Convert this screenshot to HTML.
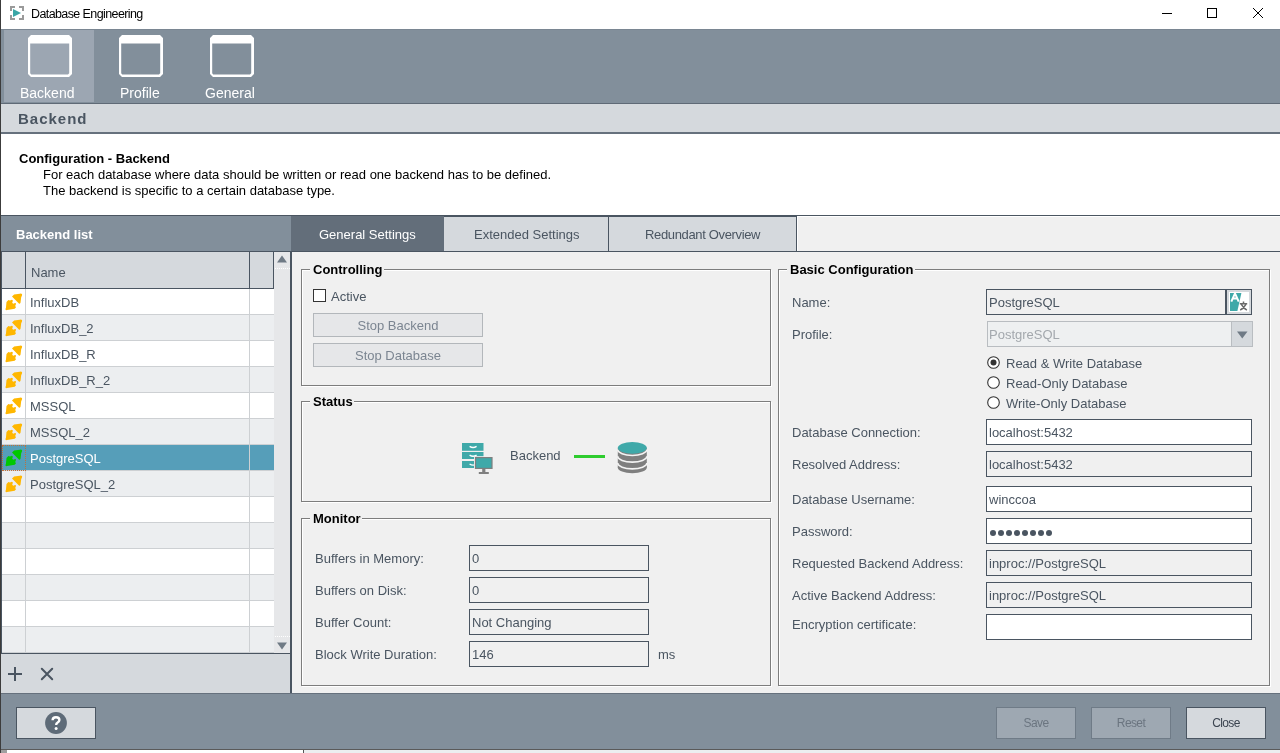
<!DOCTYPE html>
<html><head><meta charset="utf-8">
<style>
*{box-sizing:border-box;margin:0;padding:0}
html,body{width:1280px;height:753px;overflow:hidden;background:#fff}
body{position:relative;font-family:"Liberation Sans",sans-serif;font-size:13px;color:#4a5561}
.a{position:absolute}
.t{position:absolute;white-space:nowrap;will-change:transform}
svg{position:absolute;overflow:visible}
</style></head><body>
<div class="a" style="left:0px;top:0px;width:1280px;height:29px;background:#fff"></div>
<svg style="left:10px;top:6px" width="14" height="14" viewBox="0 0 14 14">
<path d="M1 5V1H5 M9 1H13V5 M13 9V13H9 M5 13H1V9" fill="none" stroke="#9a9a9a" stroke-width="2"/>
<path d="M3 3L11 7L3 11Z" fill="#3aa6a6"/></svg>
<div class="t" style="left:30.5px;top:7.92px;font-size:12.5px;line-height:12.5px;font-weight:400;color:#000;letter-spacing:-0.6px">Database Engineering</div>
<div class="a" style="left:1162px;top:13px;width:10px;height:1px;background:#000"></div>
<div class="a" style="left:1207px;top:8px;width:10px;height:10px;border:1px solid #000"></div>
<svg style="left:1253px;top:8px" width="10" height="10" viewBox="0 0 10 10"><path d="M0 0L10 10M10 0L0 10" stroke="#000" stroke-width="1"/></svg>
<div class="a" style="left:0px;top:29px;width:1280px;height:75px;background:#828f9b;border-top:1px solid #7a8692;border-bottom:1px solid #5f6a76"></div>
<div class="a" style="left:4px;top:30px;width:90px;height:72px;background:#9ca6b2"></div>
<svg style="left:28px;top:35px" width="44" height="42" viewBox="0 0 44 42"><path fill-rule="evenodd" fill="#fff" d="M3 0H41L44 3V39L41 42H3L0 39V3Z M2.2 8.6V38.2L3.2 39.4H40L41.2 38.2V8.6Z"/></svg>
<div class="t" style="left:20px;top:86.15px;font-size:14px;line-height:14px;font-weight:400;color:#fff;">Backend</div>
<svg style="left:119px;top:35px" width="44" height="42" viewBox="0 0 44 42"><path fill-rule="evenodd" fill="#fff" d="M3 0H41L44 3V39L41 42H3L0 39V3Z M2.2 8.6V38.2L3.2 39.4H40L41.2 38.2V8.6Z"/></svg>
<div class="t" style="left:119.5px;top:86.15px;font-size:14px;line-height:14px;font-weight:400;color:#fff;">Profile</div>
<svg style="left:210px;top:35px" width="44" height="42" viewBox="0 0 44 42"><path fill-rule="evenodd" fill="#fff" d="M3 0H41L44 3V39L41 42H3L0 39V3Z M2.2 8.6V38.2L3.2 39.4H40L41.2 38.2V8.6Z"/></svg>
<div class="t" style="left:204.6px;top:86.15px;font-size:14px;line-height:14px;font-weight:400;color:#fff;">General</div>
<div class="a" style="left:0px;top:104px;width:1280px;height:30px;background:#d5d9dd;border-bottom:2px solid #66717d"></div>
<div class="t" style="left:18px;top:111.30px;font-size:15px;line-height:15px;font-weight:700;color:#4a5561;letter-spacing:1px">Backend</div>
<div class="a" style="left:0px;top:134px;width:1280px;height:81px;background:#fff"></div>
<div class="t" style="left:19px;top:151.99px;font-size:13px;line-height:13px;font-weight:700;color:#000;">Configuration - Backend</div>
<div class="t" style="left:43px;top:167.99px;font-size:13px;line-height:13px;font-weight:400;color:#000;">For each database where data should be written or read one backend has to be defined.</div>
<div class="t" style="left:43px;top:183.99px;font-size:13px;line-height:13px;font-weight:400;color:#000;">The backend is specific to a certain database type.</div>
<div class="a" style="left:0px;top:215px;width:292px;height:478px;background:#eceef0;border-top:1px solid #4a5561"></div>
<div class="a" style="left:0px;top:216px;width:291px;height:35px;background:#828f9b"></div>
<div class="t" style="left:16px;top:227.99px;font-size:13px;line-height:13px;font-weight:700;color:#fff;">Backend list</div>
<div class="a" style="left:1px;top:251px;width:273px;height:38px;background:#d5d9dd;border-top:1px solid #4a5561;border-bottom:1px solid #4a5561;border-right:1px solid #4a5561"></div>
<div class="a" style="left:25px;top:251px;width:1px;height:38px;background:#4a5561"></div>
<div class="a" style="left:249px;top:251px;width:1px;height:38px;background:#4a5561"></div>
<div class="t" style="left:31px;top:265.99px;font-size:13px;line-height:13px;font-weight:400;color:#4a5561;">Name</div>
<div class="a" style="left:1px;top:289px;width:273px;height:26px;background:#fff"></div>
<div class="a" style="left:1px;top:314px;width:273px;height:1px;background:#cdd0d3"></div>
<div class="a" style="left:25px;top:289px;width:1px;height:26px;background:#cdd0d3"></div>
<div class="a" style="left:249px;top:289px;width:1px;height:26px;background:#cdd0d3"></div>
<svg style="left:2px;top:290px" width="24" height="24" viewBox="0 0 24 24"><path d="M10 6.4L12.1 4.4L17.8 3.7Q19.2 2.9 20.1 4.3Q20.3 5.2 19.2 7.3L18.5 12.7Q17.9 14.1 16.9 13.6Z" fill="#ffb700"/><path d="M3.5 19.4Q3.2 18.6 3.9 18.2L4.5 12.1L6.4 10.1L8 10.5L9.9 9.7Q11.1 10 10.8 10.9L10.2 12.7L11.2 13.7L13.1 13Q14.2 13.1 14 14.1L13.2 15.9L14 17.2L12.7 18.8L5.1 20.1Q4 20.3 3.5 19.4Z" fill="#ffb700"/></svg>
<div class="t" style="left:30px;top:295.99px;font-size:13px;line-height:13px;font-weight:400;color:#4a5561;">InfluxDB</div>
<div class="a" style="left:1px;top:315px;width:273px;height:26px;background:#eceef0"></div>
<div class="a" style="left:1px;top:340px;width:273px;height:1px;background:#cdd0d3"></div>
<div class="a" style="left:25px;top:315px;width:1px;height:26px;background:#cdd0d3"></div>
<div class="a" style="left:249px;top:315px;width:1px;height:26px;background:#cdd0d3"></div>
<svg style="left:2px;top:316px" width="24" height="24" viewBox="0 0 24 24"><path d="M10 6.4L12.1 4.4L17.8 3.7Q19.2 2.9 20.1 4.3Q20.3 5.2 19.2 7.3L18.5 12.7Q17.9 14.1 16.9 13.6Z" fill="#ffb700"/><path d="M3.5 19.4Q3.2 18.6 3.9 18.2L4.5 12.1L6.4 10.1L8 10.5L9.9 9.7Q11.1 10 10.8 10.9L10.2 12.7L11.2 13.7L13.1 13Q14.2 13.1 14 14.1L13.2 15.9L14 17.2L12.7 18.8L5.1 20.1Q4 20.3 3.5 19.4Z" fill="#ffb700"/></svg>
<div class="t" style="left:30px;top:321.99px;font-size:13px;line-height:13px;font-weight:400;color:#4a5561;">InfluxDB_2</div>
<div class="a" style="left:1px;top:341px;width:273px;height:26px;background:#fff"></div>
<div class="a" style="left:1px;top:366px;width:273px;height:1px;background:#cdd0d3"></div>
<div class="a" style="left:25px;top:341px;width:1px;height:26px;background:#cdd0d3"></div>
<div class="a" style="left:249px;top:341px;width:1px;height:26px;background:#cdd0d3"></div>
<svg style="left:2px;top:342px" width="24" height="24" viewBox="0 0 24 24"><path d="M10 6.4L12.1 4.4L17.8 3.7Q19.2 2.9 20.1 4.3Q20.3 5.2 19.2 7.3L18.5 12.7Q17.9 14.1 16.9 13.6Z" fill="#ffb700"/><path d="M3.5 19.4Q3.2 18.6 3.9 18.2L4.5 12.1L6.4 10.1L8 10.5L9.9 9.7Q11.1 10 10.8 10.9L10.2 12.7L11.2 13.7L13.1 13Q14.2 13.1 14 14.1L13.2 15.9L14 17.2L12.7 18.8L5.1 20.1Q4 20.3 3.5 19.4Z" fill="#ffb700"/></svg>
<div class="t" style="left:30px;top:347.99px;font-size:13px;line-height:13px;font-weight:400;color:#4a5561;">InfluxDB_R</div>
<div class="a" style="left:1px;top:367px;width:273px;height:26px;background:#eceef0"></div>
<div class="a" style="left:1px;top:392px;width:273px;height:1px;background:#cdd0d3"></div>
<div class="a" style="left:25px;top:367px;width:1px;height:26px;background:#cdd0d3"></div>
<div class="a" style="left:249px;top:367px;width:1px;height:26px;background:#cdd0d3"></div>
<svg style="left:2px;top:368px" width="24" height="24" viewBox="0 0 24 24"><path d="M10 6.4L12.1 4.4L17.8 3.7Q19.2 2.9 20.1 4.3Q20.3 5.2 19.2 7.3L18.5 12.7Q17.9 14.1 16.9 13.6Z" fill="#ffb700"/><path d="M3.5 19.4Q3.2 18.6 3.9 18.2L4.5 12.1L6.4 10.1L8 10.5L9.9 9.7Q11.1 10 10.8 10.9L10.2 12.7L11.2 13.7L13.1 13Q14.2 13.1 14 14.1L13.2 15.9L14 17.2L12.7 18.8L5.1 20.1Q4 20.3 3.5 19.4Z" fill="#ffb700"/></svg>
<div class="t" style="left:30px;top:373.99px;font-size:13px;line-height:13px;font-weight:400;color:#4a5561;">InfluxDB_R_2</div>
<div class="a" style="left:1px;top:393px;width:273px;height:26px;background:#fff"></div>
<div class="a" style="left:1px;top:418px;width:273px;height:1px;background:#cdd0d3"></div>
<div class="a" style="left:25px;top:393px;width:1px;height:26px;background:#cdd0d3"></div>
<div class="a" style="left:249px;top:393px;width:1px;height:26px;background:#cdd0d3"></div>
<svg style="left:2px;top:394px" width="24" height="24" viewBox="0 0 24 24"><path d="M10 6.4L12.1 4.4L17.8 3.7Q19.2 2.9 20.1 4.3Q20.3 5.2 19.2 7.3L18.5 12.7Q17.9 14.1 16.9 13.6Z" fill="#ffb700"/><path d="M3.5 19.4Q3.2 18.6 3.9 18.2L4.5 12.1L6.4 10.1L8 10.5L9.9 9.7Q11.1 10 10.8 10.9L10.2 12.7L11.2 13.7L13.1 13Q14.2 13.1 14 14.1L13.2 15.9L14 17.2L12.7 18.8L5.1 20.1Q4 20.3 3.5 19.4Z" fill="#ffb700"/></svg>
<div class="t" style="left:30px;top:399.99px;font-size:13px;line-height:13px;font-weight:400;color:#4a5561;">MSSQL</div>
<div class="a" style="left:1px;top:419px;width:273px;height:26px;background:#eceef0"></div>
<div class="a" style="left:1px;top:444px;width:273px;height:1px;background:#cdd0d3"></div>
<div class="a" style="left:25px;top:419px;width:1px;height:26px;background:#cdd0d3"></div>
<div class="a" style="left:249px;top:419px;width:1px;height:26px;background:#cdd0d3"></div>
<svg style="left:2px;top:420px" width="24" height="24" viewBox="0 0 24 24"><path d="M10 6.4L12.1 4.4L17.8 3.7Q19.2 2.9 20.1 4.3Q20.3 5.2 19.2 7.3L18.5 12.7Q17.9 14.1 16.9 13.6Z" fill="#ffb700"/><path d="M3.5 19.4Q3.2 18.6 3.9 18.2L4.5 12.1L6.4 10.1L8 10.5L9.9 9.7Q11.1 10 10.8 10.9L10.2 12.7L11.2 13.7L13.1 13Q14.2 13.1 14 14.1L13.2 15.9L14 17.2L12.7 18.8L5.1 20.1Q4 20.3 3.5 19.4Z" fill="#ffb700"/></svg>
<div class="t" style="left:30px;top:425.99px;font-size:13px;line-height:13px;font-weight:400;color:#4a5561;">MSSQL_2</div>
<div class="a" style="left:1px;top:445px;width:273px;height:26px;background:#569eb9"></div>
<div class="a" style="left:1px;top:470px;width:273px;height:1px;background:#cdd0d3"></div>
<div class="a" style="left:249px;top:445px;width:1px;height:26px;background:#cdd0d3"></div>
<svg style="left:2px;top:446px" width="24" height="24" viewBox="0 0 24 24"><path d="M10 6.4L12.1 4.4L17.8 3.7Q19.2 2.9 20.1 4.3Q20.3 5.2 19.2 7.3L18.5 12.7Q17.9 14.1 16.9 13.6Z" fill="#00c800"/><path d="M3.5 19.4Q3.2 18.6 3.9 18.2L4.5 12.1L6.4 10.1L8 10.5L9.9 9.7Q11.1 10 10.8 10.9L10.2 12.7L11.2 13.7L13.1 13Q14.2 13.1 14 14.1L13.2 15.9L14 17.2L12.7 18.8L5.1 20.1Q4 20.3 3.5 19.4Z" fill="#00c800"/></svg>
<div class="t" style="left:30px;top:451.99px;font-size:13px;line-height:13px;font-weight:400;color:#fff;">PostgreSQL</div>
<div class="a" style="left:2px;top:445px;width:24px;height:26px;border:1px dotted #c0703a"></div>
<div class="a" style="left:1px;top:471px;width:273px;height:26px;background:#eceef0"></div>
<div class="a" style="left:1px;top:496px;width:273px;height:1px;background:#cdd0d3"></div>
<div class="a" style="left:25px;top:471px;width:1px;height:26px;background:#cdd0d3"></div>
<div class="a" style="left:249px;top:471px;width:1px;height:26px;background:#cdd0d3"></div>
<svg style="left:2px;top:472px" width="24" height="24" viewBox="0 0 24 24"><path d="M10 6.4L12.1 4.4L17.8 3.7Q19.2 2.9 20.1 4.3Q20.3 5.2 19.2 7.3L18.5 12.7Q17.9 14.1 16.9 13.6Z" fill="#ffb700"/><path d="M3.5 19.4Q3.2 18.6 3.9 18.2L4.5 12.1L6.4 10.1L8 10.5L9.9 9.7Q11.1 10 10.8 10.9L10.2 12.7L11.2 13.7L13.1 13Q14.2 13.1 14 14.1L13.2 15.9L14 17.2L12.7 18.8L5.1 20.1Q4 20.3 3.5 19.4Z" fill="#ffb700"/></svg>
<div class="t" style="left:30px;top:477.99px;font-size:13px;line-height:13px;font-weight:400;color:#4a5561;">PostgreSQL_2</div>
<div class="a" style="left:1px;top:497px;width:273px;height:26px;background:#fff"></div>
<div class="a" style="left:1px;top:522px;width:273px;height:1px;background:#cdd0d3"></div>
<div class="a" style="left:25px;top:497px;width:1px;height:26px;background:#cdd0d3"></div>
<div class="a" style="left:249px;top:497px;width:1px;height:26px;background:#cdd0d3"></div>
<div class="a" style="left:1px;top:523px;width:273px;height:26px;background:#eceef0"></div>
<div class="a" style="left:1px;top:548px;width:273px;height:1px;background:#cdd0d3"></div>
<div class="a" style="left:25px;top:523px;width:1px;height:26px;background:#cdd0d3"></div>
<div class="a" style="left:249px;top:523px;width:1px;height:26px;background:#cdd0d3"></div>
<div class="a" style="left:1px;top:549px;width:273px;height:26px;background:#fff"></div>
<div class="a" style="left:1px;top:574px;width:273px;height:1px;background:#cdd0d3"></div>
<div class="a" style="left:25px;top:549px;width:1px;height:26px;background:#cdd0d3"></div>
<div class="a" style="left:249px;top:549px;width:1px;height:26px;background:#cdd0d3"></div>
<div class="a" style="left:1px;top:575px;width:273px;height:26px;background:#eceef0"></div>
<div class="a" style="left:1px;top:600px;width:273px;height:1px;background:#cdd0d3"></div>
<div class="a" style="left:25px;top:575px;width:1px;height:26px;background:#cdd0d3"></div>
<div class="a" style="left:249px;top:575px;width:1px;height:26px;background:#cdd0d3"></div>
<div class="a" style="left:1px;top:601px;width:273px;height:26px;background:#fff"></div>
<div class="a" style="left:1px;top:626px;width:273px;height:1px;background:#cdd0d3"></div>
<div class="a" style="left:25px;top:601px;width:1px;height:26px;background:#cdd0d3"></div>
<div class="a" style="left:249px;top:601px;width:1px;height:26px;background:#cdd0d3"></div>
<div class="a" style="left:1px;top:627px;width:273px;height:26px;background:#eceef0"></div>
<div class="a" style="left:1px;top:652px;width:273px;height:1px;background:#cdd0d3"></div>
<div class="a" style="left:25px;top:627px;width:1px;height:26px;background:#cdd0d3"></div>
<div class="a" style="left:249px;top:627px;width:1px;height:26px;background:#cdd0d3"></div>
<div class="a" style="left:1px;top:251px;width:1px;height:402px;background:#4a5561"></div>
<div class="a" style="left:274px;top:252px;width:17px;height:401px;background:#e6e7e9"></div>
<svg style="left:276px;top:254.5px" width="12" height="8" viewBox="0 0 12 8"><path d="M1 7.5L6 0.5L11 7.5Z" fill="#6f7a85"/></svg>
<div class="a" style="left:275px;top:268px;width:15px;height:1px;border-top:1px dotted #fff"></div>
<svg style="left:276px;top:642px" width="12" height="8" viewBox="0 0 12 8"><path d="M1 0.5L6 7.5L11 0.5Z" fill="#6f7a85"/></svg>
<div class="a" style="left:275px;top:636px;width:15px;height:1px;border-top:1px dotted #fff"></div>
<div class="a" style="left:290px;top:251px;width:2px;height:442px;background:#4a5561"></div>
<div class="a" style="left:274px;top:251px;width:16px;height:1px;background:#4a5561"></div>
<div class="a" style="left:0px;top:653px;width:291px;height:40px;background:#d5d9dd;border-top:1px solid #4a5561"></div>
<div class="a" style="left:290px;top:653px;width:2px;height:40px;background:#4a5561"></div>
<div class="a" style="left:292px;top:692px;width:988px;height:1px;background:#fff"></div>
<svg style="left:8px;top:667px" width="14" height="14" viewBox="0 0 14 14"><path d="M0 7H14M7 0V14" stroke="#4a5561" stroke-width="2"/></svg>
<svg style="left:41px;top:668px" width="12" height="12" viewBox="0 0 12 12"><path d="M0.8 0.8L11.2 11.2M11.2 0.8L0.8 11.2" stroke="#4a5561" stroke-width="2" stroke-linecap="round"/></svg>
<div class="a" style="left:291px;top:215px;width:989px;height:478px;background:#f0f0f0;border-top:1px solid #4a5561"></div>
<div class="a" style="left:291px;top:216px;width:989px;height:36px;background:#f0f0f0;border-bottom:1px solid #4a5561"></div>
<div class="a" style="left:291px;top:216px;width:153px;height:35px;background:#636e7a"></div>
<div class="a" style="left:444px;top:216px;width:165px;height:35px;background:#d5d9dd;border-right:1px solid #4a5561"></div>
<div class="a" style="left:609px;top:216px;width:188px;height:35px;background:#d5d9dd;border-right:1px solid #4a5561"></div>
<div class="t" style="left:319px;top:227.99px;font-size:13px;line-height:13px;font-weight:400;color:#fff;">General Settings</div>
<div class="a" style="left:444px;top:216px;width:353px;height:1px;background:#4a5561"></div>
<div class="a" style="left:797px;top:216px;width:483px;height:1px;background:#fff"></div>
<div class="a" style="left:797px;top:216px;width:1px;height:35px;background:#fff"></div>
<div class="a" style="left:290px;top:252px;width:2px;height:441px;background:#4a5561"></div>
<div class="t" style="left:473.5px;top:227.99px;font-size:13px;line-height:13px;font-weight:400;color:#4a5561;">Extended Settings</div>
<div class="t" style="left:645px;top:227.99px;font-size:13px;line-height:13px;font-weight:400;color:#4a5561;letter-spacing:-0.35px">Redundant Overview</div>
<div class="a" style="left:301px;top:269px;width:470px;height:117px;border:1px solid #7d7d7d;box-shadow:inset 1px 1px 0 #fff, 1px 1px 0 #fff"></div>
<div class="a" style="left:310px;top:263px;width:74px;height:12px;background:#f0f0f0"></div>
<div class="t" style="left:312.5px;top:262.99px;font-size:13px;line-height:13px;font-weight:700;color:#000;">Controlling</div>
<div class="a" style="left:313px;top:289px;width:13px;height:13px;border:1px solid #333;background:#fff"></div>
<div class="t" style="left:331px;top:289.99px;font-size:13px;line-height:13px;font-weight:400;color:#4a5561;">Active</div>
<div class="a" style="left:313px;top:313px;width:170px;height:24px;background:#e6e7e9;border:1px solid #b3b7bb"></div>
<div class="t" style="left:198.0px;width:400px;text-align:center;top:319.29px;font-size:13px;line-height:13px;font-weight:400;color:#7b8591;">Stop Backend</div>
<div class="a" style="left:313px;top:343px;width:170px;height:24px;background:#e6e7e9;border:1px solid #b3b7bb"></div>
<div class="t" style="left:198.0px;width:400px;text-align:center;top:349.29px;font-size:13px;line-height:13px;font-weight:400;color:#7b8591;">Stop Database</div>
<div class="a" style="left:301px;top:401px;width:470px;height:101px;border:1px solid #7d7d7d;box-shadow:inset 1px 1px 0 #fff, 1px 1px 0 #fff"></div>
<div class="a" style="left:310px;top:395px;width:44px;height:12px;background:#f0f0f0"></div>
<div class="t" style="left:312.5px;top:394.99px;font-size:13px;line-height:13px;font-weight:700;color:#000;">Status</div>
<svg style="left:458px;top:438px" width="40" height="40" viewBox="0 0 40 40">
<rect x="4" y="5" width="21.5" height="7.8" fill="#3fa9a9"/>
<rect x="4" y="14" width="21.5" height="7" fill="#3fa9a9"/>
<rect x="4" y="23" width="21.5" height="7" fill="#3fa9a9"/>
<path d="M11.6 8.4Q15 10.6 18.6 8.4" stroke="#fff" stroke-width="1.4" fill="none"/>
<path d="M11.6 17.2Q15 19.4 18.6 17.2" stroke="#fff" stroke-width="1.4" fill="none"/>
<path d="M11.6 26Q15 28.2 18.6 26" stroke="#fff" stroke-width="1.4" fill="none"/>
<rect x="16" y="18.2" width="19.5" height="13.6" fill="#f0f0f0"/>
<rect x="17.5" y="19.6" width="16.5" height="10.8" fill="#3fa9a9" stroke="#7f7f7f" stroke-width="1.2"/>
<rect x="24.2" y="30.8" width="3.2" height="3.4" fill="#7f7f7f"/>
<rect x="20.8" y="34" width="10" height="2" fill="#7f7f7f"/>
</svg>
<div class="t" style="left:510px;top:448.99px;font-size:13px;line-height:13px;font-weight:400;color:#4a5561;">Backend</div>
<div class="a" style="left:574px;top:455px;width:31px;height:3px;background:#2ecc2e"></div>
<svg style="left:612px;top:438px" width="40" height="40" viewBox="0 0 40 40">
<rect x="5.8" y="9.85" width="29" height="19.6" fill="#7f7f7f"/>
<ellipse cx="20.3" cy="29.45" rx="14.5" ry="5.85" fill="#7f7f7f"/>
<path d="M5.8 11.6A14.5 5.85 0 0 0 34.8 11.6" stroke="#f4f4f4" stroke-width="1.6" fill="none"/>
<path d="M5.8 18.3A14.5 5.85 0 0 0 34.8 18.3" stroke="#f4f4f4" stroke-width="1.6" fill="none"/>
<path d="M5.8 25A14.5 5.85 0 0 0 34.8 25" stroke="#f4f4f4" stroke-width="1.6" fill="none"/>
<ellipse cx="20.3" cy="9.85" rx="14.5" ry="5.85" fill="#3fa9a9"/>
</svg>
<div class="a" style="left:301px;top:518px;width:470px;height:168px;border:1px solid #7d7d7d;box-shadow:inset 1px 1px 0 #fff, 1px 1px 0 #fff"></div>
<div class="a" style="left:310px;top:512px;width:52px;height:12px;background:#f0f0f0"></div>
<div class="t" style="left:312.5px;top:511.99px;font-size:13px;line-height:13px;font-weight:700;color:#000;">Monitor</div>
<div class="t" style="left:315px;top:551.99px;font-size:13px;line-height:13px;font-weight:400;color:#4a5561;">Buffers in Memory:</div>
<div class="a" style="left:469px;top:545px;width:180px;height:26px;border:1px solid #4a5561"></div>
<div class="t" style="left:472px;top:551.99px;font-size:13px;line-height:13px;font-weight:400;color:#4a5561;">0</div>
<div class="t" style="left:315px;top:583.99px;font-size:13px;line-height:13px;font-weight:400;color:#4a5561;">Buffers on Disk:</div>
<div class="a" style="left:469px;top:577px;width:180px;height:26px;border:1px solid #4a5561"></div>
<div class="t" style="left:472px;top:583.99px;font-size:13px;line-height:13px;font-weight:400;color:#4a5561;">0</div>
<div class="t" style="left:315px;top:615.99px;font-size:13px;line-height:13px;font-weight:400;color:#4a5561;">Buffer Count:</div>
<div class="a" style="left:469px;top:609px;width:180px;height:26px;border:1px solid #4a5561"></div>
<div class="t" style="left:472px;top:615.99px;font-size:13px;line-height:13px;font-weight:400;color:#4a5561;">Not Changing</div>
<div class="t" style="left:315px;top:647.99px;font-size:13px;line-height:13px;font-weight:400;color:#4a5561;">Block Write Duration:</div>
<div class="a" style="left:469px;top:641px;width:180px;height:26px;border:1px solid #4a5561"></div>
<div class="t" style="left:472px;top:647.99px;font-size:13px;line-height:13px;font-weight:400;color:#4a5561;">146</div>
<div class="t" style="left:658px;top:647.99px;font-size:13px;line-height:13px;font-weight:400;color:#4a5561;">ms</div>
<div class="a" style="left:778px;top:269px;width:492px;height:417px;border:1px solid #7d7d7d;box-shadow:inset 1px 1px 0 #fff, 1px 1px 0 #fff"></div>
<div class="a" style="left:787px;top:263px;width:128px;height:12px;background:#f0f0f0"></div>
<div class="t" style="left:789.5px;top:262.99px;font-size:13px;line-height:13px;font-weight:700;color:#000;">Basic Configuration</div>
<div class="t" style="left:792px;top:295.99px;font-size:13px;line-height:13px;font-weight:400;color:#4a5561;">Name:</div>
<div class="a" style="left:986px;top:289px;width:241px;height:26px;border:1px solid #4a5561;border-right-width:2px"></div>
<div class="t" style="left:989px;top:295.99px;font-size:13px;line-height:13px;font-weight:400;color:#4a5561;">PostgreSQL</div>
<div class="a" style="left:1226px;top:289px;width:26px;height:26px;background:#d5d9dd;border:1px solid #4a5561"></div>
<div class="a" style="left:1229px;top:292px;width:20px;height:20px;background:#fff"></div>
<svg style="left:1229px;top:292px" width="20" height="20" viewBox="0 0 20 20">
<path d="M1 1H12.4L8.4 19H1Z" fill="#3fa9a9"/>
<path d="M2.3 9.6L6 1.4L9.7 9.6M3.7 6.4H8.3" stroke="#fff" stroke-width="2" fill="none"/>
<path d="M10.8 11.7H18.2M14.5 9.6V11.7M12.3 12.3Q15 16.6 17.9 18.2M16.9 12.3Q14.6 16.6 11.2 18" stroke="#6a6a6a" stroke-width="1.5" fill="none"/>
</svg>
<div class="t" style="left:792px;top:327.99px;font-size:13px;line-height:13px;font-weight:400;color:#4a5561;">Profile:</div>
<div class="a" style="left:987px;top:321px;width:266px;height:26px;background:#eef0f1;border:1px solid #b9bdc1"></div>
<div class="a" style="left:1231px;top:322px;width:21px;height:24px;background:#d5d9dd;border-left:1px solid #b9bdc1"></div>
<svg style="left:1237px;top:331px" width="11" height="8" viewBox="0 0 11 8"><path d="M0 0.5H10.5L5.25 7.5Z" fill="#6f7a85"/></svg>
<div class="t" style="left:989px;top:327.99px;font-size:13px;line-height:13px;font-weight:400;color:#a3a8ad;">PostgreSQL</div>
<svg style="left:987px;top:356.0px" width="13" height="13" viewBox="0 0 13 13"><circle cx="6.5" cy="6.5" r="5.8" fill="#fff" stroke="#333" stroke-width="1.1"/><circle cx="6.5" cy="6.5" r="3" fill="#333"/></svg>
<div class="t" style="left:1006px;top:356.99px;font-size:13px;line-height:13px;font-weight:400;color:#4a5561;">Read &amp; Write Database</div>
<svg style="left:987px;top:376.0px" width="13" height="13" viewBox="0 0 13 13"><circle cx="6.5" cy="6.5" r="5.8" fill="#fff" stroke="#333" stroke-width="1.1"/></svg>
<div class="t" style="left:1006px;top:376.99px;font-size:13px;line-height:13px;font-weight:400;color:#4a5561;">Read-Only Database</div>
<svg style="left:987px;top:396.0px" width="13" height="13" viewBox="0 0 13 13"><circle cx="6.5" cy="6.5" r="5.8" fill="#fff" stroke="#333" stroke-width="1.1"/></svg>
<div class="t" style="left:1006px;top:396.99px;font-size:13px;line-height:13px;font-weight:400;color:#4a5561;">Write-Only Database</div>
<div class="t" style="left:792px;top:425.99px;font-size:13px;line-height:13px;font-weight:400;color:#4a5561;">Database Connection:</div>
<div class="a" style="left:986px;top:419px;width:266px;height:26px;background:#fff;border:1px solid #4a5561"></div>
<div class="t" style="left:989px;top:425.99px;font-size:13px;line-height:13px;font-weight:400;color:#4a5561;">localhost:5432</div>
<div class="t" style="left:792px;top:457.99px;font-size:13px;line-height:13px;font-weight:400;color:#4a5561;">Resolved Address:</div>
<div class="a" style="left:986px;top:451px;width:266px;height:26px;background:#f0f0f0;border:1px solid #4a5561"></div>
<div class="t" style="left:989px;top:457.99px;font-size:13px;line-height:13px;font-weight:400;color:#4a5561;">localhost:5432</div>
<div class="t" style="left:792px;top:492.99px;font-size:13px;line-height:13px;font-weight:400;color:#4a5561;">Database Username:</div>
<div class="a" style="left:986px;top:486px;width:266px;height:26px;background:#fff;border:1px solid #4a5561"></div>
<div class="t" style="left:989px;top:492.99px;font-size:13px;line-height:13px;font-weight:400;color:#4a5561;">winccoa</div>
<div class="t" style="left:792px;top:524.99px;font-size:13px;line-height:13px;font-weight:400;color:#4a5561;">Password:</div>
<div class="a" style="left:986px;top:518px;width:266px;height:26px;background:#fff;border:1px solid #4a5561"></div>
<div class="a" style="left:990px;top:530px;width:6px;height:6px;border-radius:50%;background:#4a5561"></div>
<div class="a" style="left:998px;top:530px;width:6px;height:6px;border-radius:50%;background:#4a5561"></div>
<div class="a" style="left:1006px;top:530px;width:6px;height:6px;border-radius:50%;background:#4a5561"></div>
<div class="a" style="left:1014px;top:530px;width:6px;height:6px;border-radius:50%;background:#4a5561"></div>
<div class="a" style="left:1022px;top:530px;width:6px;height:6px;border-radius:50%;background:#4a5561"></div>
<div class="a" style="left:1030px;top:530px;width:6px;height:6px;border-radius:50%;background:#4a5561"></div>
<div class="a" style="left:1038px;top:530px;width:6px;height:6px;border-radius:50%;background:#4a5561"></div>
<div class="a" style="left:1046px;top:530px;width:6px;height:6px;border-radius:50%;background:#4a5561"></div>
<div class="t" style="left:792px;top:556.99px;font-size:13px;line-height:13px;font-weight:400;color:#4a5561;">Requested Backend Address:</div>
<div class="a" style="left:986px;top:550px;width:266px;height:26px;background:#f0f0f0;border:1px solid #4a5561"></div>
<div class="t" style="left:989px;top:556.99px;font-size:13px;line-height:13px;font-weight:400;color:#4a5561;">inproc://PostgreSQL</div>
<div class="t" style="left:792px;top:588.99px;font-size:13px;line-height:13px;font-weight:400;color:#4a5561;">Active Backend Address:</div>
<div class="a" style="left:986px;top:582px;width:266px;height:26px;background:#f0f0f0;border:1px solid #4a5561"></div>
<div class="t" style="left:989px;top:588.99px;font-size:13px;line-height:13px;font-weight:400;color:#4a5561;">inproc://PostgreSQL</div>
<div class="t" style="left:792px;top:617.99px;font-size:13px;line-height:13px;font-weight:400;color:#4a5561;">Encryption certificate:</div>
<div class="a" style="left:986px;top:614px;width:266px;height:26px;background:#fff;border:1px solid #4a5561"></div>
<div class="a" style="left:0px;top:693px;width:1280px;height:57px;background:#828f9b;border-top:1px solid #66717d;border-bottom:1px solid #5a5a5a"></div>
<div class="a" style="left:16px;top:707px;width:80px;height:32px;background:#d5d9dd;border:1px solid #4a5561"></div>
<svg style="left:45px;top:712px" width="22" height="22" viewBox="0 0 22 22"><circle cx="11" cy="11" r="10.9" fill="#5e6b78"/>
<path d="M7.6 8.3Q7.6 5.2 11 5.2Q14.4 5.2 14.4 8Q14.4 9.6 12.4 10.7Q11.2 11.4 11.2 13" stroke="#fff" stroke-width="2.4" fill="none"/><circle cx="11.1" cy="16.4" r="1.5" fill="#fff"/></svg>
<div class="a" style="left:996px;top:707px;width:80px;height:32px;background:#9ea8b2;border:1px solid #6f7b87"></div>
<div class="t" style="left:836.0px;width:400px;text-align:center;top:716.84px;font-size:12px;line-height:12px;font-weight:400;color:#6b7580;letter-spacing:-0.6px">Save</div>
<div class="a" style="left:1091px;top:707px;width:80px;height:32px;background:#9ea8b2;border:1px solid #6f7b87"></div>
<div class="t" style="left:931.0px;width:400px;text-align:center;top:716.84px;font-size:12px;line-height:12px;font-weight:400;color:#6b7580;letter-spacing:-0.6px">Reset</div>
<div class="a" style="left:1186px;top:707px;width:80px;height:32px;background:#d5d9dd;border:1px solid #4a5561"></div>
<div class="t" style="left:1026.0px;width:400px;text-align:center;top:716.84px;font-size:12px;line-height:12px;font-weight:400;color:#3b4450;letter-spacing:-0.6px">Close</div>
<div class="a" style="left:0px;top:750px;width:1280px;height:3px;background:#fff"></div>
<div class="a" style="left:0px;top:750px;width:7px;height:3px;background:#a0a0a0"></div>
<div class="a" style="left:303px;top:750px;width:1px;height:3px;background:#555"></div>
<div class="a" style="left:304px;top:750px;width:976px;height:3px;background:#eceef0"></div>
<div class="a" style="left:0px;top:0px;width:1px;height:753px;background:#3c3c3c"></div>
</body></html>
